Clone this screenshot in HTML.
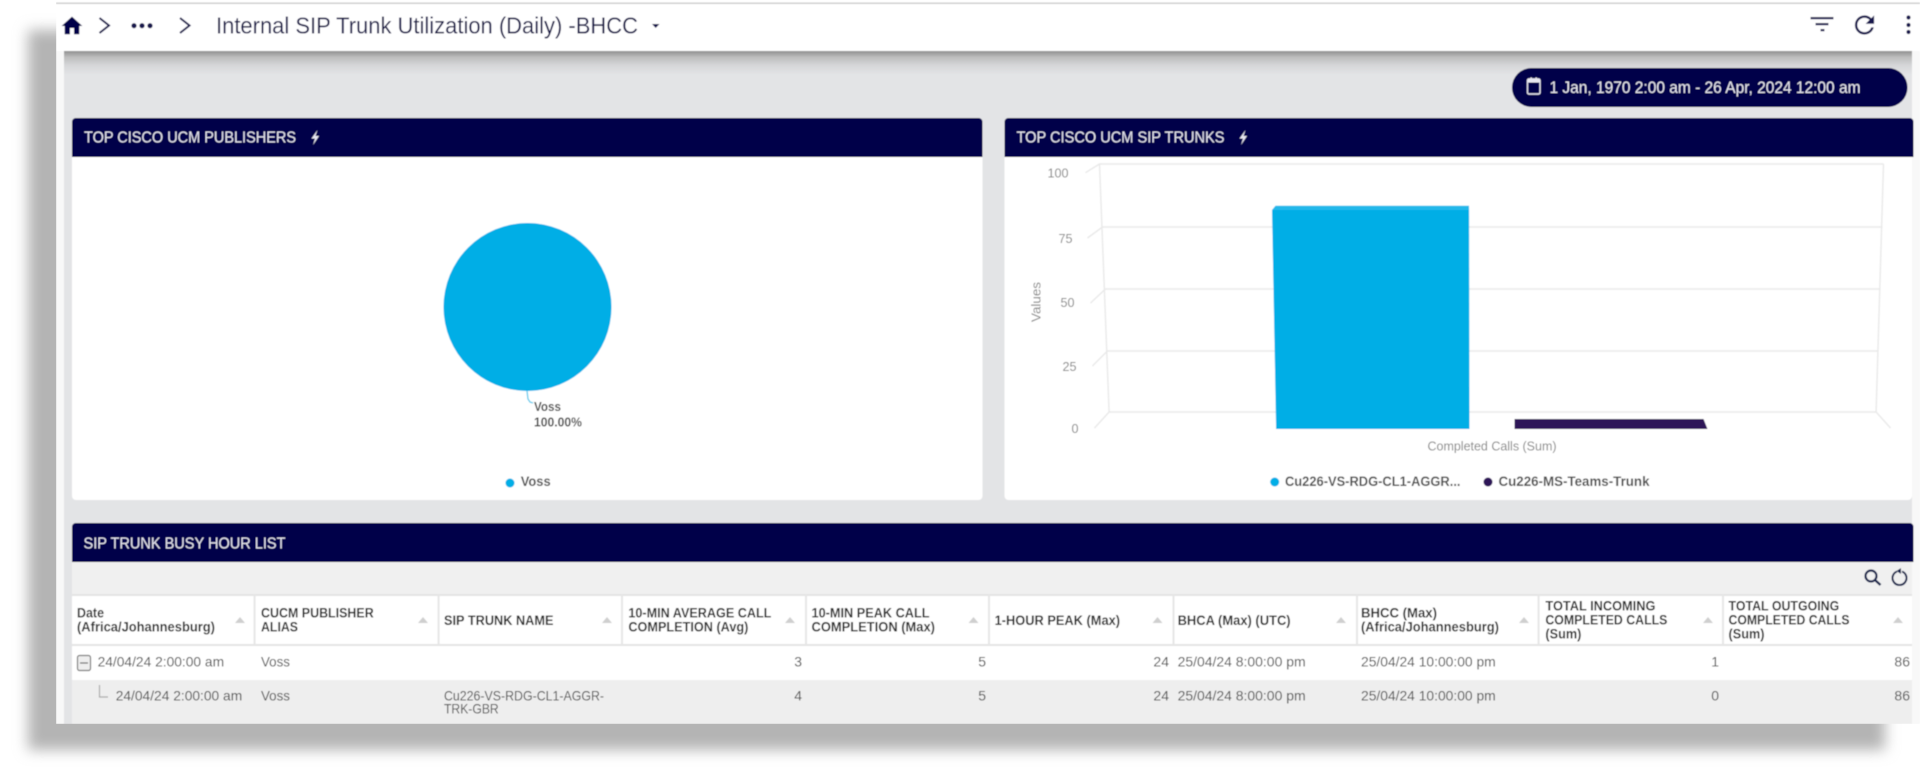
<!DOCTYPE html>
<html lang="en">
<head>
<meta charset="utf-8">
<title>Internal SIP Trunk Utilization (Daily) -BHCC</title>
<style>
html,body{margin:0;padding:0;background:#fff;width:1920px;height:774px;overflow:hidden}
svg{display:block}
text{font-family:"Liberation Sans",sans-serif}
.hd{font-size:13.5px;font-weight:bold;fill:#2a2a2a}
.td{font-size:14px;fill:#505050}
.nm{font-size:14px;fill:#505050;text-anchor:end}
.ax{font-size:13px;fill:#858585}
.lg{font-size:13.5px;font-weight:bold;fill:#505050}
.ttl{font-size:15.5px;fill:#e6e6f0}
.grid{stroke:#e9e9e9;stroke-width:1.4;fill:none}
.sep{stroke:#e6e6e6;stroke-width:2}
.ar{fill:#cfcfcf}
</style>
</head>
<body>
<svg width="1920" height="774" viewBox="0 0 1920 774" xmlns="http://www.w3.org/2000/svg">
<defs>
<filter id="bl" x="-5%" y="-5%" width="110%" height="110%"><feGaussianBlur stdDeviation="7"/></filter>
<filter id="soft" x="0" y="0" width="100%" height="100%"><feGaussianBlur stdDeviation="0.4"/></filter>
<linearGradient id="ns" x1="0" y1="0" x2="0" y2="1"><stop offset="0" stop-color="#8f8f8f"/><stop offset="0.25" stop-color="#bcbcbc"/><stop offset="0.6" stop-color="#d6d7d9"/><stop offset="1" stop-color="#e3e4e6"/></linearGradient>
</defs>

<rect width="1920" height="774" fill="#fff"/>
<!-- drop shadow -->
<rect x="28" y="30" width="1857" height="720" fill="#b4b4b4" filter="url(#bl)"/>

<g filter="url(#soft)">
<!-- window -->
<rect x="56" y="4" width="1864" height="720" fill="#f8f8f8"/>
<rect x="64" y="51" width="1848" height="673" fill="#e3e4e6"/>
<rect x="64" y="51" width="1848" height="24" fill="url(#ns)"/>
<!-- nav -->
<rect x="56" y="0" width="1864" height="3" fill="#fff"/>
<rect x="56" y="2.5" width="1864" height="1.5" fill="#cfcfcf"/>
<rect x="56" y="4" width="1864" height="47" fill="#fff"/>
<path d="M10 20v-6h4v6h5v-8h3L12 3 2 12h3v8z" transform="translate(59.5 13.5) scale(1.04)" fill="#05054a"/>
<polyline points="99.5,18 109,25.5 99.5,33" fill="none" stroke="#14144e" stroke-width="2"/>
<circle cx="134" cy="25.7" r="2.6" fill="#14144e"/><circle cx="142" cy="25.7" r="2.6" fill="#14144e"/><circle cx="150" cy="25.7" r="2.6" fill="#14144e"/>
<polyline points="180,18 189.5,25.5 180,33" fill="none" stroke="#14144e" stroke-width="2"/>
<text x="216" y="33.5" font-size="23.5" fill="#16164a" textLength="422" lengthAdjust="spacingAndGlyphs">Internal SIP Trunk Utilization (Daily) -BHCC</text>
<polygon points="652,24 659.5,24 655.7,28" fill="#14144e"/>
<g transform="translate(-1.5 0)">
<rect x="1812" y="17" width="23" height="2.2" fill="#14144e"/><rect x="1817" y="23" width="13" height="2.2" fill="#14144e"/><rect x="1822" y="29" width="4" height="2.2" fill="#14144e"/>
<path d="M17.65 6.35A7.958 7.958 0 0012 4c-4.42 0-7.99 3.58-7.99 8s3.57 8 7.99 8c3.73 0 6.84-2.55 7.73-6h-2.08A5.99 5.99 0 0112 18c-3.31 0-6-2.69-6-6s2.69-6 6-6c1.66 0 3.14.69 4.22 1.78L13 11h7V4l-2.35 2.35z" transform="translate(1851.6 10.6) scale(1.2)" fill="#14144e"/>
<circle cx="1910" cy="17.5" r="2.1" fill="#14144e"/><circle cx="1910" cy="25" r="2.1" fill="#14144e"/><circle cx="1910" cy="32" r="2.1" fill="#14144e"/>
</g>

<!-- date pill -->
<g transform="translate(-2.5 0)">
<rect x="1514.5" y="68" width="395.5" height="39" rx="19.5" fill="#010048"/>
<rect x="1530" y="79" width="12.5" height="15" rx="1.5" fill="none" stroke="#e8e8f0" stroke-width="1.4"/>
<rect x="1530" y="79" width="12.5" height="3.5" fill="#e8e8f0"/>
<rect x="1533" y="77.5" width="1.4" height="3" fill="#e8e8f0"/><rect x="1538" y="77.5" width="1.4" height="3" fill="#e8e8f0"/>
<text x="1552" y="93" font-size="16.5" fill="#e8e8f0" textLength="311" lengthAdjust="spacingAndGlyphs">1 Jan, 1970 2:00 am - 26 Apr, 2024 12:00 am</text>
</g>

<!-- panel 1 -->
<rect x="72" y="118" width="910.5" height="382" rx="4" fill="#fff"/>
<path d="M72 157v-35a4 4 0 0 1 4-4h902.500a4 4 0 0 1 4 4v35z" fill="#010048"/>
<text x="84" y="142.500" class="ttl" textLength="212" lengthAdjust="spacingAndGlyphs">TOP CISCO UCM PUBLISHERS</text>
<polygon points="317.5,130 311.5,138.5 315,138.5 313,145 319,136 315.5,136" fill="#e6e6f0"/>
<circle cx="527.5" cy="307" r="84" fill="#00aee6"/>
<polyline points="527,391 528,399 530,402 533,403" fill="none" stroke="#66cdee" stroke-width="1.4"/>
<text x="534" y="411" font-size="12.5" font-weight="bold" fill="#4a4a4a" textLength="27" lengthAdjust="spacingAndGlyphs">Voss</text>
<text x="534" y="426.500" font-size="12.5" font-weight="bold" fill="#4a4a4a" textLength="48" lengthAdjust="spacingAndGlyphs">100.00%</text>
<circle cx="510" cy="483" r="4.5" fill="#00aee6"/>
<text x="520.7" y="486" class="lg" textLength="30" lengthAdjust="spacingAndGlyphs">Voss</text>

<!-- panel 2 -->
<rect x="1004.5" y="118" width="907.5" height="382" rx="4" fill="#fff"/>
<path d="M1004.5 157v-35a4 4 0 0 1 4-4h901a4 4 0 0 1 4 4v35z" fill="#010048"/>
<text x="1016.5" y="142.500" class="ttl" textLength="208" lengthAdjust="spacingAndGlyphs">TOP CISCO UCM SIP TRUNKS</text>
<polygon points="1245.500,130 1239.500,138.5 1243,138.5 1241,145 1247,136 1243.500,136" fill="#e6e6f0"/>

<!-- chart -->
<g transform="translate(-1.5 0)">
<g class="grid">
<polyline points="1087,172.7 1101,164 1885,164 1885,164"/>
<polyline points="1089,238 1104,227 1884,227"/>
<polyline points="1092,303 1107,289 1881,289"/>
<polyline points="1094,366 1109,351 1879,351"/>
<polyline points="1096,428 1110.6,412 1877.6,412 1892,428"/>
<polyline points="1101,164 1110.6,412"/>
<polyline points="1885,164 1877.6,412"/>
</g>
<text x="1070" y="177.500" class="ax" text-anchor="end" textLength="21" lengthAdjust="spacingAndGlyphs">100</text>
<text x="1074" y="243" class="ax" text-anchor="end" textLength="14" lengthAdjust="spacingAndGlyphs">75</text>
<text x="1076" y="307" class="ax" text-anchor="end" textLength="14" lengthAdjust="spacingAndGlyphs">50</text>
<text x="1078" y="371" class="ax" text-anchor="end" textLength="14" lengthAdjust="spacingAndGlyphs">25</text>
<text x="1080" y="433" class="ax" text-anchor="end" textLength="7" lengthAdjust="spacingAndGlyphs">0</text>
<text transform="translate(1042 322) rotate(-90)" class="ax" textLength="40" lengthAdjust="spacingAndGlyphs">Values</text>
<polygon points="1273.5,210 1277,205.7 1470.5,205.7 1470.6,210" fill="#20b8ea"/>
<polygon points="1273.5,210 1277.6,429 1471,429 1470.6,210" fill="#00aee6"/>
<polygon points="1516,419 1705,419 1709,429 1516,429" fill="#2d1458"/>
<text x="1429" y="450.500" class="ax" textLength="129" lengthAdjust="spacingAndGlyphs">Completed Calls (Sum)</text>
<circle cx="1276.2" cy="482" r="4.5" fill="#00aee6"/>
<text x="1286.500" y="486" class="lg" textLength="175.500" lengthAdjust="spacingAndGlyphs">Cu226-VS-RDG-CL1-AGGR...</text>
<circle cx="1489.500" cy="482" r="4.5" fill="#2d1458"/>
<text x="1500" y="486" class="lg" textLength="151" lengthAdjust="spacingAndGlyphs">Cu226-MS-Teams-Trunk</text>
</g>

<!-- table panel -->
<path d="M72 562v-35a4 4 0 0 1 4-4h1833.500a4 4 0 0 1 4 4v35z" fill="#010048"/>
<text x="83.500" y="548.500" class="ttl" textLength="202" lengthAdjust="spacingAndGlyphs">SIP TRUNK BUSY HOUR LIST</text>
<rect x="72" y="562" width="1840" height="33" fill="#f0f0f0"/>
<rect x="72" y="595" width="1840" height="50" fill="#fff"/>
<rect x="72" y="645" width="1840" height="35" fill="#fff"/>
<rect x="72" y="680" width="1840" height="44" fill="#eee"/>
<rect x="72" y="594" width="1840" height="2" fill="#e4e4e4"/>
<rect x="72" y="644" width="1840" height="2" fill="#e4e4e4"/>
<circle cx="1871" cy="576" r="5.5" fill="none" stroke="#14244e" stroke-width="2.2"/>
<line x1="1875" y1="580" x2="1880.5" y2="585" stroke="#14244e" stroke-width="2.4"/>
<path d="M1897 571.5a7 7 0 1 0 5 0" fill="none" stroke="#14244e" stroke-width="2"/>
<polygon points="1901,568 1901,574 1896.5,571" fill="#14244e"/>

<g class="sep">
<line x1="254.6" y1="595" x2="254.6" y2="645"/><line x1="438.6" y1="595" x2="438.6" y2="645"/><line x1="622" y1="595" x2="622" y2="645"/><line x1="806" y1="595" x2="806" y2="645"/><line x1="989" y1="595" x2="989" y2="645"/><line x1="1173.5" y1="595" x2="1173.5" y2="645"/><line x1="1357" y1="595" x2="1357" y2="645"/><line x1="1538.6" y1="595" x2="1538.6" y2="645"/><line x1="1723" y1="595" x2="1723" y2="645"/>
</g>

<!-- header cells -->
<text x="77" y="617.500" class="hd" textLength="27" lengthAdjust="spacingAndGlyphs">Date</text>
<text x="77" y="631.500" class="hd" textLength="138" lengthAdjust="spacingAndGlyphs">(Africa/Johannesburg)</text>
<polygon class="ar" points="235,623 245,623 240,617"/>
<text x="261" y="617.500" class="hd" textLength="112.7" lengthAdjust="spacingAndGlyphs">CUCM PUBLISHER</text>
<text x="261" y="631.500" class="hd" textLength="37" lengthAdjust="spacingAndGlyphs">ALIAS</text>
<polygon class="ar" points="418,623 428,623 423,617"/>
<text x="444" y="625" class="hd" textLength="109.5" lengthAdjust="spacingAndGlyphs">SIP TRUNK NAME</text>
<polygon class="ar" points="602,623 612,623 607,617"/>
<text x="628.4" y="617.500" class="hd" textLength="143" lengthAdjust="spacingAndGlyphs">10-MIN AVERAGE CALL</text>
<text x="628.4" y="631.500" class="hd" textLength="120" lengthAdjust="spacingAndGlyphs">COMPLETION (Avg)</text>
<polygon class="ar" points="785,623 795,623 790,617"/>
<text x="811.5" y="617.500" class="hd" textLength="118" lengthAdjust="spacingAndGlyphs">10-MIN PEAK CALL</text>
<text x="811.5" y="631.500" class="hd" textLength="123.5" lengthAdjust="spacingAndGlyphs">COMPLETION (Max)</text>
<polygon class="ar" points="968.5,623 978.5,623 973.5,617"/>
<text x="994.6" y="625" class="hd" textLength="125.4" lengthAdjust="spacingAndGlyphs">1-HOUR PEAK (Max)</text>
<polygon class="ar" points="1152.5,623 1162.5,623 1157.5,617"/>
<text x="1177.6" y="625" class="hd" textLength="113" lengthAdjust="spacingAndGlyphs">BHCA (Max) (UTC)</text>
<polygon class="ar" points="1336,623 1346,623 1341,617"/>
<text x="1361" y="617.500" class="hd" textLength="76" lengthAdjust="spacingAndGlyphs">BHCC (Max)</text>
<text x="1361" y="631.500" class="hd" textLength="138" lengthAdjust="spacingAndGlyphs">(Africa/Johannesburg)</text>
<polygon class="ar" points="1519,623 1529,623 1524,617"/>
<text x="1545.4" y="610.500" class="hd" textLength="110" lengthAdjust="spacingAndGlyphs">TOTAL INCOMING</text>
<text x="1545.4" y="624.500" class="hd" textLength="122" lengthAdjust="spacingAndGlyphs">COMPLETED CALLS</text>
<text x="1545.4" y="638.500" class="hd" textLength="36" lengthAdjust="spacingAndGlyphs">(Sum)</text>
<polygon class="ar" points="1703,623 1713,623 1708,617"/>
<text x="1728.5" y="610.500" class="hd" textLength="110.7" lengthAdjust="spacingAndGlyphs">TOTAL OUTGOING</text>
<text x="1728.5" y="624.500" class="hd" textLength="121" lengthAdjust="spacingAndGlyphs">COMPLETED CALLS</text>
<text x="1728.5" y="638.500" class="hd" textLength="36" lengthAdjust="spacingAndGlyphs">(Sum)</text>
<polygon class="ar" points="1893,623 1903,623 1898,617"/>

<!-- row 1 -->
<rect x="77.5" y="655.5" width="13" height="15" rx="2" fill="#eee" stroke="#777" stroke-width="1.2"/>
<line x1="80" y1="663" x2="88" y2="663" stroke="#666" stroke-width="1.2"/>
<text x="97.6" y="666.500" class="td" textLength="126.5" lengthAdjust="spacingAndGlyphs">24/04/24 2:00:00 am</text>
<text x="261" y="666.500" class="td" textLength="29" lengthAdjust="spacingAndGlyphs">Voss</text>
<text x="802" y="666.500" class="nm">3</text>
<text x="986" y="666.500" class="nm">5</text>
<text x="1169" y="666.500" class="nm">24</text>
<text x="1177.6" y="666.500" class="td" textLength="128" lengthAdjust="spacingAndGlyphs">25/04/24 8:00:00 pm</text>
<text x="1361" y="666.500" class="td" textLength="134.7" lengthAdjust="spacingAndGlyphs">25/04/24 10:00:00 pm</text>
<text x="1719" y="666.500" class="nm">1</text>
<text x="1910" y="666.500" class="nm">86</text>

<!-- row 2 -->
<polyline points="99.5,685 99.5,697 108,697" fill="none" stroke="#aaa" stroke-width="1.2"/>
<text x="115.7" y="700.500" class="td" textLength="126.5" lengthAdjust="spacingAndGlyphs">24/04/24 2:00:00 am</text>
<text x="261" y="700.500" class="td" textLength="29" lengthAdjust="spacingAndGlyphs">Voss</text>
<text x="444" y="700.500" class="td" textLength="160" lengthAdjust="spacingAndGlyphs">Cu226-VS-RDG-CL1-AGGR-</text>
<text x="444" y="713.500" class="td" textLength="54.7" lengthAdjust="spacingAndGlyphs">TRK-GBR</text>
<text x="802" y="700.500" class="nm">4</text>
<text x="986" y="700.500" class="nm">5</text>
<text x="1169" y="700.500" class="nm">24</text>
<text x="1177.6" y="700.500" class="td" textLength="128" lengthAdjust="spacingAndGlyphs">25/04/24 8:00:00 pm</text>
<text x="1361" y="700.500" class="td" textLength="134.7" lengthAdjust="spacingAndGlyphs">25/04/24 10:00:00 pm</text>
<text x="1719" y="700.500" class="nm">0</text>
<text x="1910" y="700.500" class="nm">86</text>
</g>
</svg>
</body>
</html>
